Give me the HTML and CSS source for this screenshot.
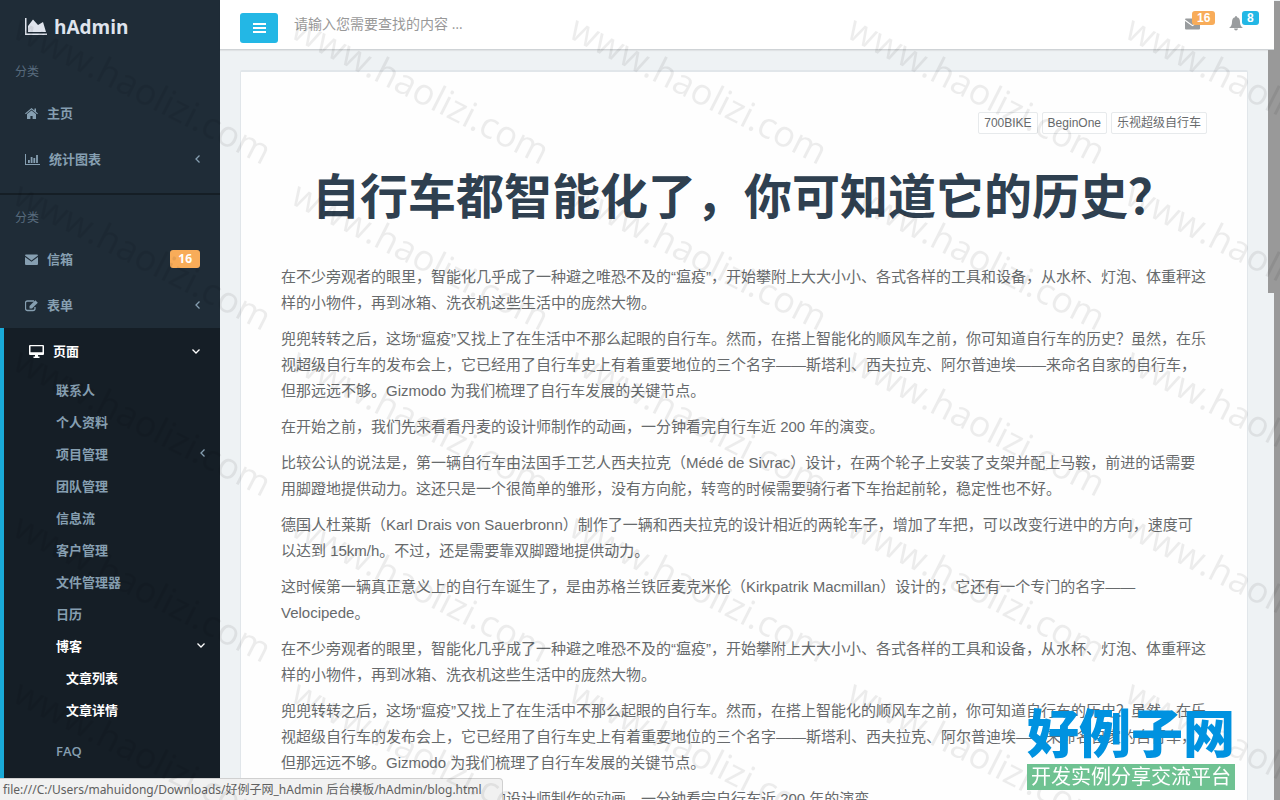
FILE: index.html
```html
<!DOCTYPE html>
<html lang="zh-CN">
<head>
    <meta charset="UTF-8">
    <meta name="viewport" content="width=device-width, initial-scale=1.0">
    <title>hAdmin - 文章详情</title>
    <link rel="stylesheet" href="styles.css">
</head>
<body>
    <div class="wrapper">
        <nav class="sidebar">
            <a class="logo" href="#">
                <svg width="24" height="20" viewBox="0 0 24 20"><path d="M1 1v17h22v-1.500H2.500V1z"/><path d="M4 15V9l5-6.500 5 5.500 5-3 3 10z"/></svg>
                <span>hAdmin</span>
            </a>
            <div class="category">分类</div>
            <a class="nav-item" href="#">
                <svg width="13" height="13" viewBox="0 0 13 13"><path d="M6.500 3.500L2 7v5h3.400V9h2.200v3H11V7z"/><path d="M6.500 1L0 6.500l.8.8L6.500 2.500l5.700 4.800.8-.8-2-1.700V1.500H9.500v2z"/></svg>
                <span>主页</span>
            </a>
            <a class="nav-item" href="#">
                <svg width="15" height="13" viewBox="0 0 15 13"><path d="M0 1h1v10h14v1H0z"/><path d="M3 7h1.800v3H3zM5.700 4h1.800v6H5.700zM8.400 5h1.800v5H8.400zM11.100 2h1.800v8h-1.800z"/></svg>
                <span>统计图表</span>
                <svg class="arrow" width="5" height="8" viewBox="0 0 5 8"><path d="M4.500.5L1 4l3.500 3.500"/></svg>
            </a>
            <hr class="divider">
            <div class="category">分类</div>
            <a class="nav-item" href="#">
                <svg width="13" height="13" viewBox="0 0 13 13"><path d="M0 2.500Q0 1.500 1 1.500h11q1 0 1 1L6.500 7.500z"/><path d="M0 4l6.500 4.700L13 4v7q0 1-1 1H1q-1 0-1-1z"/></svg>
                <span>信箱</span>
                <span class="label warning">16</span>
            </a>
            <a class="nav-item" href="#">
                <svg width="13" height="13" viewBox="0 0 13 13"><path class="line" d="M9 2H2.500Q.5 2 .5 4v5.500q0 2 2 2H8q2 0 2-2V8"/><path d="M4.500 9.500V7l5.800-5.800 2.500 2.500L7 9.500z"/></svg>
                <span>表单</span>
                <svg class="arrow" width="5" height="8" viewBox="0 0 5 8"><path d="M4.500.5L1 4l3.500 3.500"/></svg>
            </a>
            <div class="nav-group">
                <a class="nav-item active" href="#">
                    <svg width="15" height="13" viewBox="0 0 15 13"><path fill-rule="evenodd" d="M1 0h13q1 0 1 1v8q0 1-1 1H9v1.500h1.500V13h-6v-1.500H6V10H1q-1 0-1-1V1q0-1 1-1zm.5 1.300v6h12v-6z"/></svg>
                    <span>页面</span>
                    <svg class="arrow" width="8" height="5" viewBox="0 0 8 5"><path d="M.5.5L4 4 7.500.5"/></svg>
                </a>
                <ul class="submenu">
                    <li><a href="#">联系人</a></li>
                    <li><a href="#">个人资料</a></li>
                    <li><a href="#">项目管理<svg class="arrow" width="5" height="8" viewBox="0 0 5 8"><path d="M4.500.5L1 4l3.500 3.500"/></svg></a></li>
                    <li><a href="#">团队管理</a></li>
                    <li><a href="#">信息流</a></li>
                    <li><a href="#">客户管理</a></li>
                    <li><a href="#">文件管理器</a></li>
                    <li><a href="#">日历</a></li>
                    <li class="active">
                        <a href="#">博客<svg class="arrow" width="8" height="5" viewBox="0 0 8 5"><path d="M.5.5L4 4 7.500.5"/></svg></a>
                        <ul class="third-level">
                            <li><a href="#">文章列表</a></li>
                            <li><a href="#">文章详情</a></li>
                        </ul>
                    </li>
                    <li><a href="#">FAQ</a></li>
                    <li><a href="#">时间轴</a></li>
                </ul>
            </div>
        </nav>

        <div class="page">
            <header class="topbar">
                <button class="menu-toggle" type="button" aria-label="菜单">
                    <svg width="13" height="12" viewBox="0 0 13 12"><path d="M0 1h13v2H0zM0 5h13v2H0zM0 9h13v2H0z"/></svg>
                </button>
                <input class="search" type="text" placeholder="请输入您需要查找的内容 …" aria-label="搜索">
                <a class="notice" href="#" aria-label="信箱">
                    <svg width="15" height="15" viewBox="0 0 15 15"><path d="M0 3.500Q0 2.500 1 2.500h13q1 0 1 1L7.500 9z"/><path d="M0 5l7.500 5.300L15 5v7.500q0 1-1 1H1q-1 0-1-1z"/></svg>
                    <span class="label warning">16</span>
                </a>
                <a class="notice" href="#" aria-label="通知">
                    <svg width="14" height="15" viewBox="0 0 14 15"><path d="M7 0q1 0 1 1.200Q11 2 11 6q0 4 3 6H0q3-2 3-6 0-4 3-4.800Q6 0 7 0zM5 12.500h4Q8.700 14.500 7 14.500T5 12.500z"/></svg>
                    <span class="label primary">8</span>
                </a>
            </header>
            <main class="content">
                <article class="article">
                    <div class="tags">
                        <button class="tag" type="button">700BIKE</button>
                        <button class="tag" type="button">BeginOne</button>
                        <button class="tag" type="button">乐视超级自行车</button>
                    </div>
                    <h1>自行车都智能化了，你可知道它的历史？</h1>
                    <p>在不少旁观者的眼里，智能化几乎成了一种避之唯恐不及的“瘟疫”，开始攀附上大大小小、各式各样的工具和设备，从水杯、灯泡、体重秤这样的小物件，再到冰箱、洗衣机这些生活中的庞然大物。</p>
                    <p>兜兜转转之后，这场“瘟疫”又找上了在生活中不那么起眼的自行车。然而，在搭上智能化的顺风车之前，你可知道自行车的历史？虽然，在乐视超级自行车的发布会上，它已经用了自行车史上有着重要地位的三个名字——斯塔利、西夫拉克、阿尔普迪埃——来命名自家的自行车，但那远远不够。Gizmodo 为我们梳理了自行车发展的关键节点。</p>
                    <p>在开始之前，我们先来看看丹麦的设计师制作的动画，一分钟看完自行车近 200 年的演变。</p>
                    <p>比较公认的说法是，第一辆自行车由法国手工艺人西夫拉克（Médé de Sivrac）设计，在两个轮子上安装了支架并配上马鞍，前进的话需要用脚蹬地提供动力。这还只是一个很简单的雏形，没有方向舵，转弯的时候需要骑行者下车抬起前轮，稳定性也不好。</p>
                    <p>德国人杜莱斯（Karl Drais von Sauerbronn）制作了一辆和西夫拉克的设计相近的两轮车子，增加了车把，可以改变行进中的方向，速度可以达到 15km/h。不过，还是需要靠双脚蹬地提供动力。</p>
                    <p>这时候第一辆真正意义上的自行车诞生了，是由苏格兰铁匠麦克米伦（Kirkpatrik Macmillan）设计的，它还有一个专门的名字——Velocipede。</p>
                    <p>在不少旁观者的眼里，智能化几乎成了一种避之唯恐不及的“瘟疫”，开始攀附上大大小小、各式各样的工具和设备，从水杯、灯泡、体重秤这样的小物件，再到冰箱、洗衣机这些生活中的庞然大物。</p>
                    <p>兜兜转转之后，这场“瘟疫”又找上了在生活中不那么起眼的自行车。然而，在搭上智能化的顺风车之前，你可知道自行车的历史？虽然，在乐视超级自行车的发布会上，它已经用了自行车史上有着重要地位的三个名字——斯塔利、西夫拉克、阿尔普迪埃——来命名自家的自行车，但那远远不够。Gizmodo 为我们梳理了自行车发展的关键节点。</p>
                    <p>在开始之前，我们先来看看丹麦的设计师制作的动画，一分钟看完自行车近 200 年的演变。</p>
                </article>
            </main>
        </div>
    </div>

    <div class="scroll-outer"></div>
    <div class="scroll-inner"></div>
    <div class="status">file:///C:/Users/mahuidong/Downloads/好例子网_hAdmin 后台模板/hAdmin/blog.html</div>
    <svg class="watermark" aria-hidden="true">
        <defs>
            <pattern id="mark" x="8" y="10" width="278" height="166" patternUnits="userSpaceOnUse">
                <text x="3" y="27" transform="rotate(27 3 27)">www.haolizi.com</text>
            </pattern>
        </defs>
        <rect width="100%" height="100%" fill="url(#mark)"/>
    </svg>
    <div class="brand">
        <strong>好例子网</strong>
        <span>开发实例分享交流平台</span>
    </div>
</body>
</html>
```
FILE: styles.css
```css
* {
    box-sizing: border-box;
}

body {
    margin: 0;
    height: 100vh;
    overflow: hidden;
    font-family: "Open Sans", "Noto Sans CJK SC", sans-serif;
    font-size: 13px;
    color: #676a6c;
    background-color: #eef2f4;
}

a {
    color: inherit;
    text-decoration: none;
}

svg {
    flex: none;
    fill: currentColor;
}

.wrapper {
    display: flex;
    height: 100vh;
}

/* sidebar */
.sidebar {
    flex: 0 0 220px;
    overflow: hidden;
    background-color: #1f2c37;
    color: #869fb1;
    font-weight: 600;
}

.logo {
    display: flex;
    align-items: center;
    gap: 6px;
    height: 54px;
    padding-left: 24px;
    color: #dfe4ed;
    font-size: 19px;
    font-weight: 700;
}

.category {
    height: 36px;
    padding-left: 15px;
    line-height: 36px;
    font-size: 12px;
    font-weight: 400;
    color: #586b7d;
}

.nav-item {
    display: flex;
    align-items: center;
    gap: 9px;
    height: 46px;
    padding: 0 20px 0 25px;
}

.nav-item span {
    padding-bottom: 2px;
}

.nav-item .label,
.arrow {
    margin-left: auto;
}

.arrow,
.line {
    fill: none;
    stroke: currentColor;
    stroke-width: 1.3;
}

.divider {
    height: 2px;
    margin: 11px 0 5px;
    border: 0;
    background-color: #151e25;
}

.nav-group {
    border-left: 4px solid #19aad8;
    background-color: #151e26;
}

.nav-item.active,
.active > a {
    color: #fff;
}

.submenu,
.third-level {
    margin: 0;
    padding: 0;
    list-style: none;
}

.submenu a {
    display: flex;
    align-items: center;
    height: 32px;
    padding: 0 15px 2px 52px;
}

.third-level {
    padding-bottom: 10px;
    color: #fff;
}

.submenu .third-level a {
    padding-left: 62px;
}

.label {
    border-radius: 3px;
    color: #fff;
    font-weight: 700;
    text-align: center;
}

.nav-item .label {
    padding: 0 8px;
    line-height: 18px;
    font-size: 12px;
}

.warning {
    background-color: #f8ac59;
}

.primary {
    background-color: #23b7e5;
}

/* top bar */
.page {
    flex: 1;
    min-width: 0;
    display: flex;
    flex-direction: column;
}

.topbar {
    position: relative;
    flex: 0 0 50px;
    display: flex;
    align-items: center;
    margin-right: 6px;
    padding: 6px 25px 0 20px;
    background-color: #fff;
    border-bottom: 1px solid #cfd3d6;
    box-shadow: 0 1px 1px rgba(0, 0, 0, 0.06);
}

.menu-toggle {
    display: flex;
    align-items: center;
    justify-content: center;
    width: 38px;
    height: 30px;
    padding: 0;
    border: 0;
    border-radius: 3px;
    background-color: #23b7e5;
    color: #fff;
}

.search {
    flex: 1;
    height: 30px;
    margin: 0 16px;
    padding: 0 0 8px;
    border: 0;
    outline: 0;
    background: none;
    font-family: "Open Sans", "Noto Sans CJK SC", sans-serif;
    font-size: 14px;
}

.search::placeholder {
    color: #999;
}

.notice {
    position: relative;
    display: flex;
    align-items: center;
    height: 30px;
    padding-bottom: 8px;
    color: #999c9e;
}

.notice + .notice {
    margin-left: 29px;
    margin-right: 6px;
}

.notice .label {
    position: absolute;
    left: 7px;
    top: -2px;
    padding: 0 5px;
    line-height: 14px;
    font-family: "Liberation Sans", sans-serif;
    font-size: 12px;
}

.notice .primary {
    left: 13px;
}

/* article */
.content {
    flex: 1;
    overflow: hidden;
    padding: 20px 32px 0 20px;
}

.article {
    padding: 40px;
    border: 1px solid #e1e6ea;
    border-top-width: 2px;
    border-radius: 2px;
    background-color: #fefefe;
    font-family: "Liberation Sans", "Noto Sans CJK SC", sans-serif;
    font-size: 15px;
    line-height: 26px;
}

.tags {
    display: flex;
    justify-content: flex-end;
    gap: 4px;
}

.tag {
    height: 22px;
    padding: 0 5px;
    border: 1px solid #e7eaec;
    border-radius: 2px;
    background-color: #fff;
    color: #676a6c;
    font-family: "Liberation Sans", "Noto Sans CJK SC", sans-serif;
    font-size: 12px;
    line-height: 18px;
}

.article h1 {
    margin: 37px 0 39px;
    color: #2f4050;
    font-size: 48px;
    line-height: 54px;
    font-weight: 700;
    text-align: center;
}

.article p {
    margin: 0 0 10px;
}

/* scroll thumbs */
.scroll-outer,
.scroll-inner {
    position: fixed;
    width: 6px;
    background-color: #999;
}

.scroll-outer {
    top: 1px;
    right: 0;
    bottom: 0;
}

.scroll-inner {
    top: 50px;
    right: 6px;
    height: 243px;
}

.status {
    position: fixed;
    left: 0;
    bottom: 0;
    height: 22px;
    padding: 0 20px 0 3px;
    border: 1px solid #d0d0d0;
    border-width: 1px 1px 0 0;
    border-radius: 0 4px 0 0;
    background-color: #f1f1f1;
    color: #606060;
    font-family: "Noto Sans", "Noto Sans CJK SC", sans-serif;
    font-size: 12px;
    line-height: 21px;
}

.watermark {
    position: fixed;
    left: 0;
    top: 0;
    width: 100%;
    height: 100%;
    pointer-events: none;
}

.watermark text {
    fill: #000;
    fill-opacity: 0.07;
    font-family: "Open Sans", sans-serif;
    font-size: 36px;
}

.brand {
    position: fixed;
    right: 45px;
    bottom: 10px;
    display: flex;
    flex-direction: column;
    align-items: center;
    gap: 6px;
}

.brand strong {
    color: #0092e0;
    font-family: "Noto Sans CJK SC", sans-serif;
    font-size: 52px;
    font-weight: 900;
    line-height: 54px;
}

.brand span {
    padding: 0 4px;
    background-color: #6fc292;
    color: #fff;
    font-size: 20px;
    line-height: 26px;
}
```
